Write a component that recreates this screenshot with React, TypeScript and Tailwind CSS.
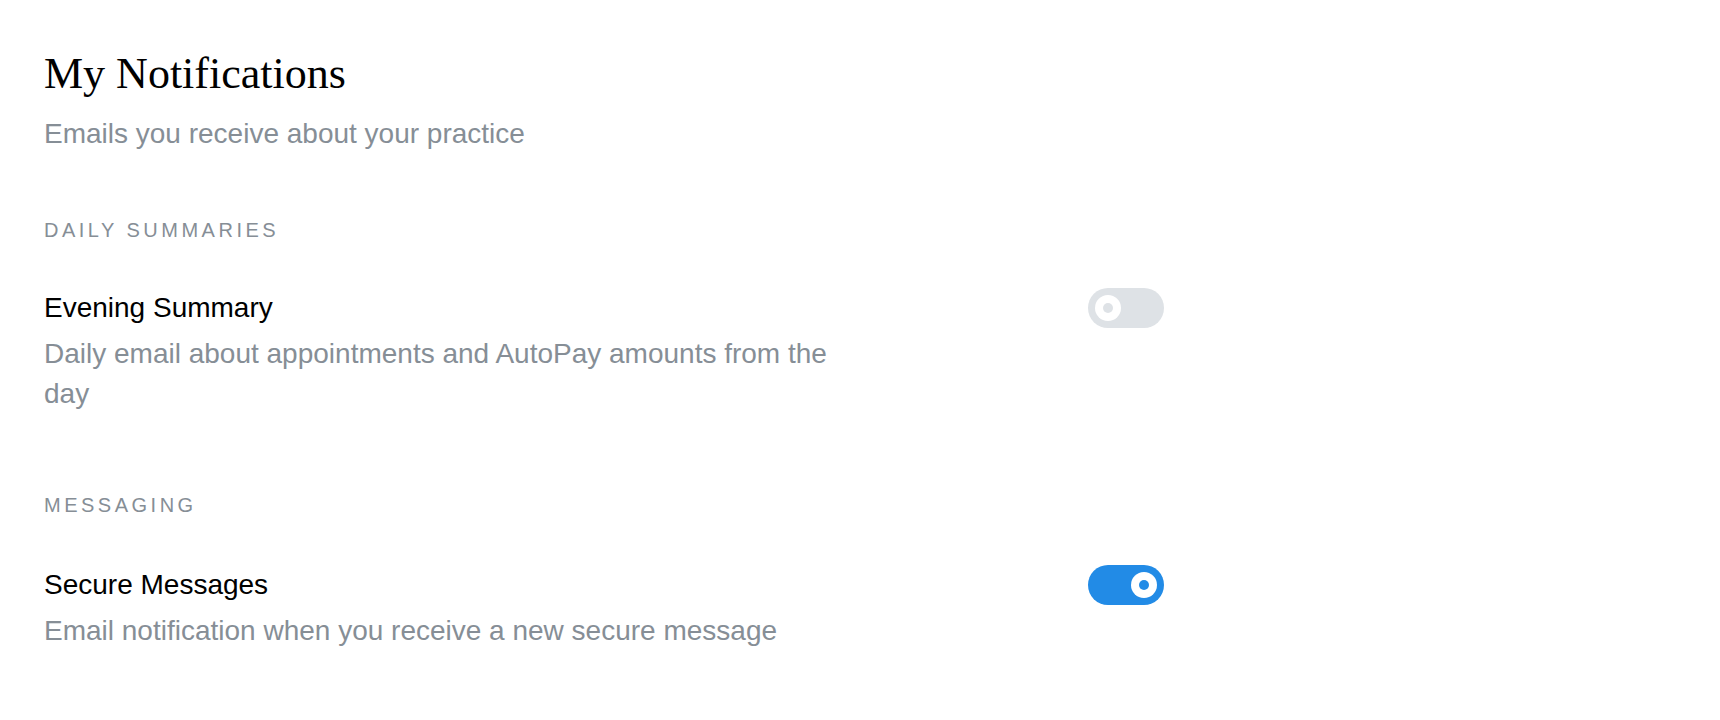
import { useState } from "react";

type Item = {
  id: string;
  title: string;
  description: string;
  enabled: boolean;
};

type Section = {
  heading: string;
  items: Item[];
};

const SECTIONS: Section[] = [
  {
    heading: "Daily Summaries",
    items: [
      {
        id: "evening",
        title: "Evening Summary",
        description: "Daily email about appointments and AutoPay amounts from the day",
        enabled: false,
      },
    ],
  },
  {
    heading: "Messaging",
    items: [
      {
        id: "secure",
        title: "Secure Messages",
        description: "Email notification when you receive a new secure message",
        enabled: true,
      },
    ],
  },
];

function Toggle({ on, onChange }: { on: boolean; onChange: () => void }) {
  return (
    <button
      type="button"
      role="switch"
      aria-checked={on}
      onClick={onChange}
      className={`-mt-[2px] flex h-10 w-[76px] shrink-0 items-center rounded-full px-[7px] transition-colors ${
        on ? "justify-end bg-[#228be6]" : "justify-start bg-[#dee2e6]"
      }`}
    >
      <span className="flex h-[26px] w-[26px] items-center justify-center rounded-full bg-white">
        <span
          className={`h-[10px] w-[10px] rounded-full ${on ? "bg-[#228be6]" : "bg-[#dee2e6]"}`}
        />
      </span>
    </button>
  );
}

export default function App() {
  const [state, setState] = useState<Record<string, boolean>>(() => {
    const init: Record<string, boolean> = {};
    SECTIONS.forEach((s) => s.items.forEach((i) => (init[i.id] = i.enabled)));
    return init;
  });

  return (
    <main className="min-h-screen bg-white px-[44px] pt-[48px] font-['Liberation_Sans',Arial,sans-serif] text-black">
      <h1 className="font-['Liberation_Serif','Times_New_Roman',serif] text-[44px] leading-[52px] font-normal">
        My Notifications
      </h1>
      <p className="mt-4 text-[28px] leading-9 text-[#868e96]">Emails you receive about your practice</p>

      {SECTIONS.map((section, si) => (
        <section key={section.heading} className={si === 0 ? "mt-[66px]" : "mt-[79px]"}>
          <h2 className="text-[20px] leading-6 tracking-[3.5px] text-[#868e96] uppercase">
            {section.heading}
          </h2>
          {section.items.map((item) => (
            <div
              key={item.id}
              className={`flex w-[1120px] items-start justify-between ${si === 0 ? "mt-[48px]" : "mt-[50px]"}`}
            >
              <div className="w-[800px]">
                <div className="text-[28px] leading-9">{item.title}</div>
                <p className="mt-[8px] text-[28px] leading-10 text-[#868e96]">{item.description}</p>
              </div>
              <Toggle
                on={state[item.id]}
                onChange={() => setState((s) => ({ ...s, [item.id]: !s[item.id] }))}
              />
            </div>
          ))}
        </section>
      ))}
    </main>
  );
}
